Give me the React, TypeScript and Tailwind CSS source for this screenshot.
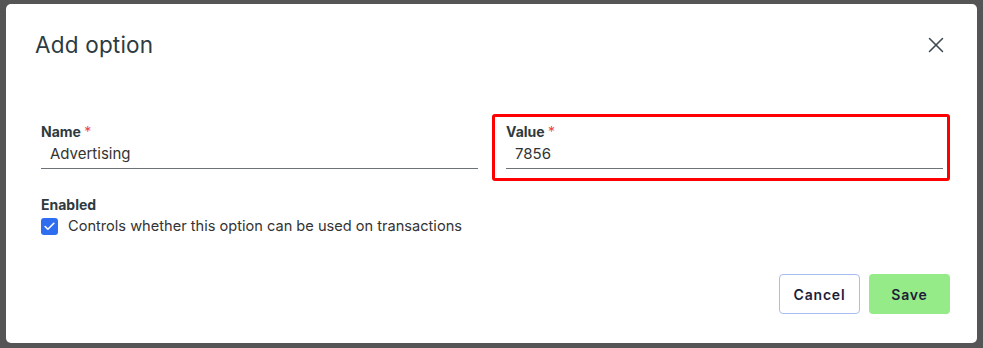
import { Check, X } from 'lucide-react';

function Field({ label, value, highlight }: { label: string; value: string; highlight?: boolean }) {
  return (
    <div className="relative">
      {highlight && (
        <div className="absolute -left-[14px] -right-[7px] -top-[8px] -bottom-[12px] rounded-[3px] border-[3px] border-[#ff0000] pointer-events-none" />
      )}
      <div className="text-[14px] leading-[20px] font-bold text-[#2f3a40]">
        {label} <span className="text-[#ef4444] font-normal">*</span>
      </div>
      <div className="border-b border-[#6b7278] px-[9px] pt-[1px] pb-[3px] text-[15px] leading-[22px] text-[#333]">
        {value}
      </div>
    </div>
  );
}

export default function App() {
  return (
    <div
      className="w-[983px] h-[348px] bg-[#555555] pt-[4px] pl-[6px] pr-[6px] pb-[5px] overflow-hidden"
      style={{ fontFamily: 'Inter, "Noto Sans", sans-serif' }}
    >
      <div className="h-[339px] w-[971px] bg-white rounded-[5px] flex flex-col pl-[35px] pr-[27px] pt-[27px] pb-[29px]">
        {/* Header */}
        <div className="flex items-center justify-between -ml-[6px] pr-[1px]">
          <h2 className="text-[22.5px] leading-[28px] text-[#2d3b41] tracking-[0.2px]">Add option</h2>
          <button className="text-[#3b4a52]">
            <X size={26} strokeWidth={1.4} />
          </button>
        </div>

        {/* Fields */}
        <div className="grid grid-cols-2 gap-[28px] mt-[63px] pr-[7px]">
          <Field label="Name" value="Advertising" />
          <Field label="Value" value="7856" highlight />
        </div>

        <div className="mt-[26px]">
          <div className="text-[14px] leading-[20px] font-bold text-[#2f3a40]">Enabled</div>
          <label className="flex items-center gap-[10px] mt-[1px]">
            <span className="w-[17px] h-[17px] rounded-[3px] bg-[#2f6df0] flex items-center justify-center text-white">
              <Check size={13} strokeWidth={3} />
            </span>
            <span className="text-[14.6px] leading-[20px] text-[#333]">
              Controls whether this option can be used on transactions
            </span>
          </label>
        </div>

        {/* Footer */}
        <div className="mt-auto flex justify-end gap-[9px]">
          <button className="w-[81px] h-[40px] rounded-[4px] border border-[#a8bdf0] bg-white text-[14px] font-semibold tracking-[0.8px] text-[#1d1d3a]">
            Cancel
          </button>
          <button className="w-[81px] h-[40px] rounded-[4px] bg-[#95eb87] text-[14px] font-semibold tracking-[0.8px] text-[#1d1d3a]">
            Save
          </button>
        </div>
      </div>
    </div>
  );
}
